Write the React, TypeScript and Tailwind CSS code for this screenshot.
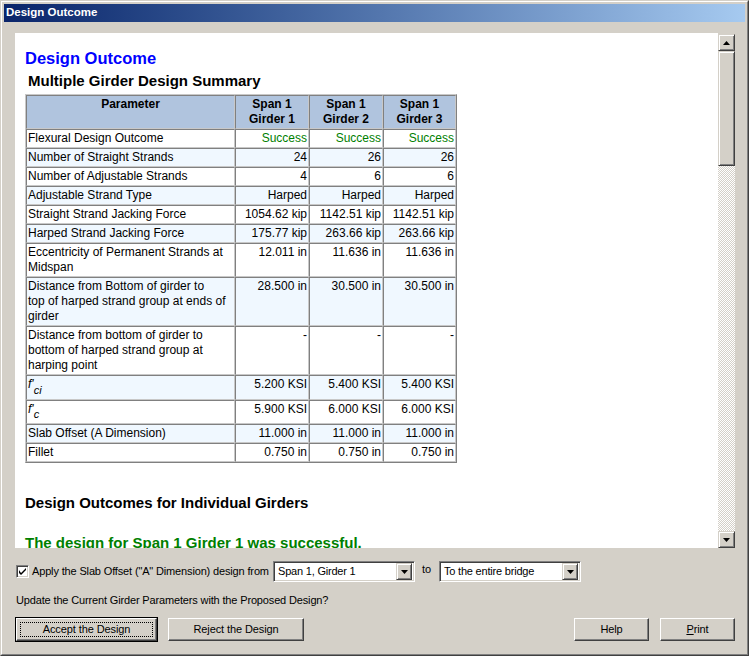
import React from 'react';

const rows: { label: React.ReactNode; vals: string[]; ok?: boolean; h?: string }[] = [
  { label: 'Flexural Design Outcome', vals: ['Success', 'Success', 'Success'], ok: true },
  { label: 'Number of Straight Strands', vals: ['24', '26', '26'] },
  { label: 'Number of Adjustable Strands', vals: ['4', '6', '6'] },
  { label: 'Adjustable Strand Type', vals: ['Harped', 'Harped', 'Harped'] },
  { label: 'Straight Strand Jacking Force', vals: ['1054.62 kip', '1142.51 kip', '1142.51 kip'] },
  { label: 'Harped Strand Jacking Force', vals: ['175.77 kip', '263.66 kip', '263.66 kip'] },
  {
    label: (
      <>
        Eccentricity of Permanent Strands at
        <br />
        Midspan
      </>
    ),
    vals: ['12.011 in', '11.636 in', '11.636 in'],
  },
  {
    label: (
      <>
        Distance from Bottom of girder to
        <br />
        top of harped strand group at ends of
        <br />
        girder
      </>
    ),
    vals: ['28.500 in', '30.500 in', '30.500 in'],
  },
  {
    label: (
      <>
        Distance from bottom of girder to
        <br />
        bottom of harped strand group at
        <br />
        harping point
      </>
    ),
    vals: ['-', '-', '-'],
  },
  {
    label: (
      <>
        <span className="italic">f'</span>
        <span className="italic text-[11px] align-[-6px]">ci</span>
      </>
    ),
    vals: ['5.200 KSI', '5.400 KSI', '5.400 KSI'],
    h: 'h-[25px]',
  },
  {
    label: (
      <>
        <span className="italic">f'</span>
        <span className="italic text-[11px] align-[-5px]">c</span>
      </>
    ),
    vals: ['5.900 KSI', '6.000 KSI', '6.000 KSI'],
    h: 'h-[24px]',
  },
  { label: 'Slab Offset (A Dimension)', vals: ['11.000 in', '11.000 in', '11.000 in'] },
  { label: 'Fillet', vals: ['0.750 in', '0.750 in', '0.750 in'] },
];

const cell =
  'border border-t-[#808080] border-l-[#808080] border-r-[#c8c8c8] border-b-[#c8c8c8] px-px py-px align-top leading-[15px]';

const btn =
  'border border-t-white border-l-white border-r-[#404040] border-b-[#404040] shadow-[inset_-1px_-1px_#808080] bg-[#d4d0c8] flex items-center justify-center';

const scrollBtn =
  'h-[17px] border border-t-[#d4d0c8] border-l-[#d4d0c8] border-r-[#404040] border-b-[#404040] shadow-[inset_1px_1px_#ffffff,inset_-1px_-1px_#808080] bg-[#d4d0c8] flex items-center justify-center';

function Arrow({ down }: { down?: boolean }) {
  return (
    <svg width="7" height="4" viewBox="0 0 7 4">
      {down ? <path d="M0 0h7L3.5 4z" fill="#000" /> : <path d="M0 4h7L3.5 0z" fill="#000" />}
    </svg>
  );
}

function Select({ value }: { value: string }) {
  return (
    <div className="w-[142px] h-[21px] border border-t-[#808080] border-l-[#808080] border-r-white border-b-white shadow-[inset_1px_1px_#404040,inset_-1px_-1px_#d4d0c8] bg-white flex items-center p-[2px]">
      <span className="flex-1 pl-[2px] text-[11px] tracking-[-0.2px]">{value}</span>
      <div className={`w-[16px] ${scrollBtn} h-[17px]`}>
        <Arrow down />
      </div>
    </div>
  );
}

export default function App() {
  return (
    <div className="w-[749px] h-[656px] bg-[#d4d0c8] border border-t-[#d4d0c8] border-l-[#d4d0c8] border-r-[#404040] border-b-[#404040] font-['Liberation_Sans',Arial,sans-serif] text-black overflow-hidden">
      <div className="h-full border border-t-white border-l-white border-r-[#808080] border-b-[#808080] p-[2px] flex flex-col">
        <div className="h-[18px] bg-gradient-to-r from-[#0a246a] to-[#a6caf0] flex items-center pl-[2px]">
          <span className="text-white font-bold text-[11.5px]">Design Outcome</span>
        </div>

        <div className="ml-[11px] mt-[11px] flex h-[515px] w-[720px]">
          <div className="flex-1 bg-white overflow-hidden pl-[10px]">
            <div className="mt-[15px] text-[16.5px] font-bold text-[#0000ff] leading-[20px]">Design Outcome</div>
            <div className="mt-[4px] pl-[3px] text-[15px] font-bold leading-[18px]">Multiple Girder Design Summary</div>
            <table className="mt-[4px] table-fixed w-[432px] border-separate border-spacing-0 border border-t-[#c8c8c8] border-l-[#c8c8c8] border-r-[#808080] border-b-[#808080] text-[12px]">
              <colgroup>
                <col className="w-[209px]" />
                <col className="w-[74px]" />
                <col className="w-[74px]" />
                <col className="w-[73px]" />
              </colgroup>
              <thead>
                <tr className="bg-[#b0c4de]">
                  <th className={`${cell} font-bold text-center h-[34px]`}>Parameter</th>
                  <th className={`${cell} font-bold text-center`}>
                    Span 1<br />
                    Girder 1
                  </th>
                  <th className={`${cell} font-bold text-center`}>
                    Span 1<br />
                    Girder 2
                  </th>
                  <th className={`${cell} font-bold text-center`}>
                    Span 1<br />
                    Girder 3
                  </th>
                </tr>
              </thead>
              <tbody>
                {rows.map((r, i) => (
                  <tr key={i} className={i % 2 === 1 ? 'bg-[#f0f8ff]' : 'bg-white'}>
                    <td className={`${cell} whitespace-nowrap ${r.h ?? ''}`}>{r.label}</td>
                    {r.vals.map((v, j) => (
                      <td key={j} className={`${cell} text-right whitespace-nowrap ${r.ok ? 'text-[#008000]' : ''}`}>
                        {v}
                      </td>
                    ))}
                  </tr>
                ))}
              </tbody>
            </table>
            <div className="mt-[31px] text-[15px] font-bold leading-[18px]">Design Outcomes for Individual Girders</div>
            <div className="mt-[22px] text-[15px] font-bold leading-[18px] text-[#008000]">
              The design for Span 1 Girder 1 was successful.
            </div>
          </div>

          <div className="w-[17px] flex flex-col pt-[1px]">
            <div className={scrollBtn}>
              <Arrow />
            </div>
            <div className="h-[115px] border border-t-[#d4d0c8] border-l-[#d4d0c8] border-r-[#404040] border-b-[#404040] shadow-[inset_1px_1px_#ffffff,inset_-1px_-1px_#808080] bg-[#d4d0c8]" />
            <div className="flex-1 bg-[repeating-conic-gradient(#d4d0c8_0%_25%,#ffffff_0%_50%)] bg-[length:2px_2px]" />
            <div className={scrollBtn}>
              <Arrow down />
            </div>
          </div>
        </div>

        <div className="ml-[12px] mt-[13px] flex items-center h-[21px] text-[11px] tracking-[-0.15px]">
          <div className="w-[13px] h-[13px] border border-t-[#808080] border-l-[#808080] border-r-white border-b-white shadow-[inset_1px_1px_#404040,inset_-1px_-1px_#d4d0c8] bg-white flex items-center justify-center">
            <svg width="7" height="7" viewBox="0 0 7 7">
              <path d="M0 2v3l2 2 5-5V0L2 5z" fill="#000" />
            </svg>
          </div>
          <span className="ml-[3px] w-[241px] whitespace-nowrap">Apply the Slab Offset ("A" Dimension) design from</span>
          <Select value="Span 1, Girder 1" />
          <span className="ml-[7px] w-[17px] self-start">to</span>
          <Select value="To the entire bridge" />
        </div>

        <div className="ml-[12px] mt-[12px] text-[11px] leading-[13px] tracking-[-0.15px]">
          Update the Current Girder Parameters with the Proposed Design?
        </div>

        <div className="ml-[11px] mt-[10px] flex items-center text-[11px] tracking-[-0.1px]">
          <div className="border border-black">
            <div className={`${btn} w-[141px] h-[23px]`}>
              <span className="outline outline-1 outline-dotted outline-black px-[22px] leading-[13px]">Accept the Design</span>
            </div>
          </div>
          <div className={`${btn} ml-[10px] w-[136px] h-[23px]`}>Reject the Design</div>
          <div className={`${btn} ml-auto w-[75px] h-[23px]`}>Help</div>
          <div className={`${btn} ml-[11px] mr-[10px] w-[75px] h-[23px]`}>
            <span>
              <span className="underline">P</span>rint
            </span>
          </div>
        </div>
      </div>
    </div>
  );
}
